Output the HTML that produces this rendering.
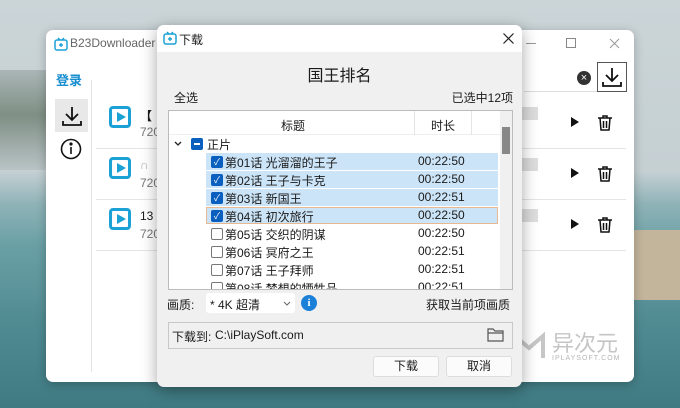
<!DOCTYPE html><html><head><meta charset="utf-8"><style>
*{box-sizing:border-box;margin:0;padding:0}
body{width:680px;height:408px;overflow:hidden;position:relative;font-family:"Liberation Sans","Noto Sans CJK SC",sans-serif;font-size:12px;color:#1a1a1a;
background:linear-gradient(180deg,#cbd5d8 0%,#c5d0d3 42%,#8fb3b7 50%,#6aa0a5 60%,#4f8a91 80%,#3f7a82 100%)}
.abs{position:absolute}
.main{left:46px;top:30px;width:588px;height:352px;background:#fff;border-radius:7px;box-shadow:0 2px 10px rgba(0,0,0,.25)}
.dlg{left:157px;top:25px;width:365px;height:362px;background:#f0f0f0;border-radius:7px;box-shadow:0 4px 16px rgba(0,0,0,.35);overflow:hidden}
.cb{position:absolute;width:12px;height:12px;border-radius:2px}
.on{background:#0a5fbf}
.off{border:1px solid #777;background:#fff}
.row{position:absolute;left:37px;width:292px;height:17px}
.sel{background:#cce4f7}
</style></head><body>
<div class="abs" style="left:0;top:70px;width:46px;height:100px;background:linear-gradient(180deg,#aab6b6,#7f8f84 45%,#b9c3c6);"></div>
<div class="abs" style="left:634px;top:230px;width:46px;height:70px;background:#c2b59b"></div>

<div class="abs main">
 <svg class="abs" style="left:8px;top:7px" width="14" height="14" viewBox="0 0 14 14"><rect x="1" y="3" width="12" height="10" rx="2" fill="none" stroke="#1ba1d6" stroke-width="1.5"/><path d="M4 1l2 2M10 1l-2 2M7 6v4M5 8h4" stroke="#1ba1d6" stroke-width="1.4"/></svg>
 <div class="abs" style="left:24px;top:6px;font-size:12px;color:#666">B23Downloader</div>
 <div class="abs" style="left:480px;top:13px;width:10px;height:1px;background:#999"></div>
 <div class="abs" style="left:520px;top:8px;width:10px;height:10px;border:1px solid #888"></div>
 <svg class="abs" style="left:563px;top:8px" width="11" height="11"><path d="M1 1l9 9M10 1l-9 9" stroke="#999" stroke-width="1"/></svg>
 <div class="abs" style="left:10px;top:40px;color:#1a8fd0;font-size:13px;font-weight:bold">登录</div>
 <div class="abs" style="left:9px;top:69px;width:33px;height:33px;background:#e8e8e8"></div>
 <svg class="abs" style="left:14px;top:74px" width="24" height="24" viewBox="0 0 24 24" fill="none" stroke="#111" stroke-width="1.8"><path d="M12 3v13M6 10l6 6 6-6M3 17v4h18v-4"/></svg>
 <svg class="abs" style="left:14px;top:108px" width="22" height="22" viewBox="0 0 22 22" fill="none" stroke="#111" stroke-width="1.6"><circle cx="11" cy="11" r="9.5"/><path d="M11 9v7"/><circle cx="11" cy="6" r=".8" fill="#111"/></svg>
 <div class="abs" style="left:45px;top:50px;width:1px;height:292px;background:#e2e2e2"></div>
 <div class="abs" style="left:478px;top:32px;width:102px;height:30px;border-bottom:1px solid #ddd"></div>
 <div class="abs" style="left:531px;top:41px;width:14px;height:14px;border-radius:50%;background:#333;color:#fff;font-size:11px;line-height:14px;text-align:center">×</div>
 <div class="abs" style="left:551px;top:32px;width:30px;height:30px;border:1px solid #555;background:#fff"></div>
 <svg class="abs" style="left:554px;top:35px" width="24" height="24" viewBox="0 0 24 24" fill="none" stroke="#111" stroke-width="1.8"><path d="M12 3v13M6 10l6 6 6-6M3 17v4h18v-4"/></svg>
 <div class="abs" style="left:50px;top:68px;width:530px;height:162px;">
  <div class="abs" style="left:0;top:50px;width:530px;height:1px;background:#e4e4e4"></div>
  <div class="abs" style="left:0;top:101px;width:530px;height:1px;background:#e4e4e4"></div>
  <div class="abs" style="left:0;top:152px;width:530px;height:1px;background:#e4e4e4"></div>
 </div>
</div>
<div class="abs" style="left:109px;top:106px;width:22px;height:22px;border:3px solid #1ba1d6;border-radius:4px"></div>
<div class="abs" style="left:109px;top:157px;width:22px;height:22px;border:3px solid #1ba1d6;border-radius:4px"></div>
<div class="abs" style="left:109px;top:208px;width:22px;height:22px;border:3px solid #1ba1d6;border-radius:4px"></div>
<svg class="abs" style="left:115px;top:111px" width="12" height="12"><path d="M2 1l9 5-9 5z" fill="#1ba1d6"/></svg>
<svg class="abs" style="left:115px;top:162px" width="12" height="12"><path d="M2 1l9 5-9 5z" fill="#1ba1d6"/></svg>
<svg class="abs" style="left:115px;top:213px" width="12" height="12"><path d="M2 1l9 5-9 5z" fill="#1ba1d6"/></svg>
<div class="abs" style="left:140px;top:107px;font-weight:bold">【</div><div class="abs" style="left:140px;top:125px;color:#777">720</div>
<div class="abs" style="left:140px;top:158px;color:#aaa">∩</div><div class="abs" style="left:140px;top:176px;color:#777">720</div>
<div class="abs" style="left:140px;top:209px">13</div><div class="abs" style="left:140px;top:227px;color:#777">720</div>
<div class="abs" style="left:522px;top:107px;width:16px;height:13px;background:#ddd"></div>
<div class="abs" style="left:522px;top:158px;width:16px;height:13px;background:#ddd"></div>
<div class="abs" style="left:522px;top:209px;width:16px;height:13px;background:#ddd"></div>
<svg class="abs" style="left:569px;top:116px" width="12" height="12"><path d="M2 1l8 5-8 5z" fill="#111"/></svg>
<svg class="abs" style="left:569px;top:167px" width="12" height="12"><path d="M2 1l8 5-8 5z" fill="#111"/></svg>
<svg class="abs" style="left:569px;top:218px" width="12" height="12"><path d="M2 1l8 5-8 5z" fill="#111"/></svg>
<svg class="abs" style="left:597px;top:114px" width="16" height="18" viewBox="0 0 16 18" fill="none" stroke="#111" stroke-width="1.5"><path d="M1 4h14M6 4V2h4v2M3 4l1 12h8l1-12M6.5 7v7M9.5 7v7"/></svg>
<svg class="abs" style="left:597px;top:165px" width="16" height="18" viewBox="0 0 16 18" fill="none" stroke="#111" stroke-width="1.5"><path d="M1 4h14M6 4V2h4v2M3 4l1 12h8l1-12M6.5 7v7M9.5 7v7"/></svg>
<svg class="abs" style="left:597px;top:216px" width="16" height="18" viewBox="0 0 16 18" fill="none" stroke="#111" stroke-width="1.5"><path d="M1 4h14M6 4V2h4v2M3 4l1 12h8l1-12M6.5 7v7M9.5 7v7"/></svg>
<svg class="abs" style="left:512px;top:332px" width="34" height="28" viewBox="0 0 34 28" fill="none" stroke="rgba(160,160,160,.6)" stroke-width="4"><path d="M3 26V4l14 12L31 4v22"/></svg>
<div class="abs" style="left:552px;top:326px;font-size:22px;color:rgba(150,150,150,.55)">异次元</div>
<div class="abs" style="left:552px;top:355px;font-size:7px;color:rgba(150,150,150,.7);letter-spacing:1px">IPLAYSOFT.COM</div>

<div class="abs dlg">
 <div class="abs" style="left:0;top:0;width:365px;height:27px;background:#fff"></div>
 <svg class="abs" style="left:6px;top:6px" width="14" height="14" viewBox="0 0 14 14"><rect x="1" y="3" width="12" height="10" rx="2" fill="none" stroke="#1ba1d6" stroke-width="1.5"/><path d="M4 1l2 2M10 1l-2 2M7 6v4M5 8h4" stroke="#1ba1d6" stroke-width="1.4"/></svg>
 <div class="abs" style="left:22px;top:6px;font-size:12px">下载</div>
 <svg class="abs" style="left:346px;top:8px" width="11" height="11"><path d="M.5 .5l10 10M10.5 .5l-10 10" stroke="#222" stroke-width="1.2"/></svg>
 <div class="abs" style="left:0;top:37px;width:365px;text-align:center;font-size:16px">国王排名</div>
 <div class="abs" style="left:17px;top:64px">全选</div>
 <div class="abs" style="right:9px;top:64px">已选中12项</div>
 <div class="abs" style="left:11px;top:85px;width:345px;height:180px;background:#fff;border:1px solid #bbb;overflow:hidden">
  <div class="abs" style="left:0;top:0;width:331px;height:24px;border-bottom:1px solid #eee"></div>
  <div class="abs" style="left:112px;top:6px">标题</div>
  <div class="abs" style="left:245px;top:0;width:1px;height:24px;background:#e5e5e5"></div>
  <div class="abs" style="left:262px;top:6px">时长</div>
  <div class="abs" style="left:302px;top:0;width:1px;height:24px;background:#e5e5e5"></div>
  <div class="abs" style="left:331px;top:0;width:13px;height:180px;background:#f0f0f0"></div>
  <div class="abs" style="left:333px;top:16px;width:8px;height:27px;background:#888"></div>
  <svg class="abs" style="left:5px;top:30px" width="8" height="6"><path d="M1 1l3 3 3-3" stroke="#222" stroke-width="1.3" fill="none"/></svg>
  <div class="cb on" style="left:22px;top:27px"><div style="position:absolute;left:3px;top:5px;width:6px;height:2px;background:#fff"></div></div>
  <div class="abs" style="left:38px;top:25px">正片</div>
  <div class="row sel" style="top:42px"></div>
  <div class="row sel" style="top:60px"></div>
  <div class="row sel" style="top:78px"></div>
  <div class="row sel" style="top:96px;border:1px solid #e8b890"></div>
  <div id="eps"></div>
 </div>
 <div class="abs" style="left:10px;top:271px">画质:</div>
 <div class="abs" style="left:49px;top:268px;width:89px;height:20px;background:#fff;border-radius:3px"></div>
 <div class="abs" style="left:53px;top:271px">* 4K 超清</div>
 <svg class="abs" style="left:126px;top:276px" width="8" height="6"><path d="M1 1l3 3 3-3" stroke="#666" stroke-width="1" fill="none"/></svg>
 <div class="abs" style="left:144px;top:270px;width:16px;height:16px;border-radius:50%;background:#1a80d8;color:#fff;font-size:11px;font-weight:bold;text-align:center;line-height:16px;font-family:'Liberation Serif',serif">i</div>
 <div class="abs" style="right:12px;top:271px">获取当前项画质</div>
 <div class="abs" style="left:11px;top:297px;width:345px;height:27px;border:1px solid #c8c8c8;background:#f0f0f0"></div>
 <div class="abs" style="left:15px;top:303px">下载到:</div>
 <div class="abs" style="left:58px;top:303px">C:\iPlaySoft.com</div>
 <svg class="abs" style="left:330px;top:302px" width="17" height="15" viewBox="0 0 17 15" fill="none" stroke="#555" stroke-width="1.2"><path d="M1 2h5l2 2h8v10H1zM1 6h15"/></svg>
 <div class="abs" style="left:216px;top:331px;width:66px;height:21px;background:#fbfbfb;border:1px solid #ddd;border-radius:3px;text-align:center;line-height:19px">下载</div>
 <div class="abs" style="left:289px;top:331px;width:66px;height:21px;background:#fbfbfb;border:1px solid #ddd;border-radius:3px;text-align:center;line-height:19px">取消</div>
</div>
<script>
var eps=[["第01话 光溜溜的王子","00:22:50",1],["第02话 王子与卡克","00:22:50",1],["第03话 新国王","00:22:51",1],["第04话 初次旅行","00:22:50",1],["第05话 交织的阴谋","00:22:50",0],["第06话 冥府之王","00:22:51",0],["第07话 王子拜师","00:22:51",0],["第08话 梦想的牺牲品","00:22:51",0]];
var h="";eps.forEach(function(e,i){var t=42+i*18;
h+='<div class="cb '+(e[2]?'on':'off')+'" style="left:42px;top:'+(t+3)+'px;color:#fff;font-size:9px;line-height:12px;text-align:center">'+(e[2]?'✓':'')+'</div>';
h+='<div class="abs" style="left:56px;top:'+(t+1)+'px">'+e[0]+'</div><div class="abs" style="left:249px;top:'+(t+1)+'px">'+e[1]+'</div>';});
document.getElementById("eps").innerHTML=h;
</script>
</body></html>
